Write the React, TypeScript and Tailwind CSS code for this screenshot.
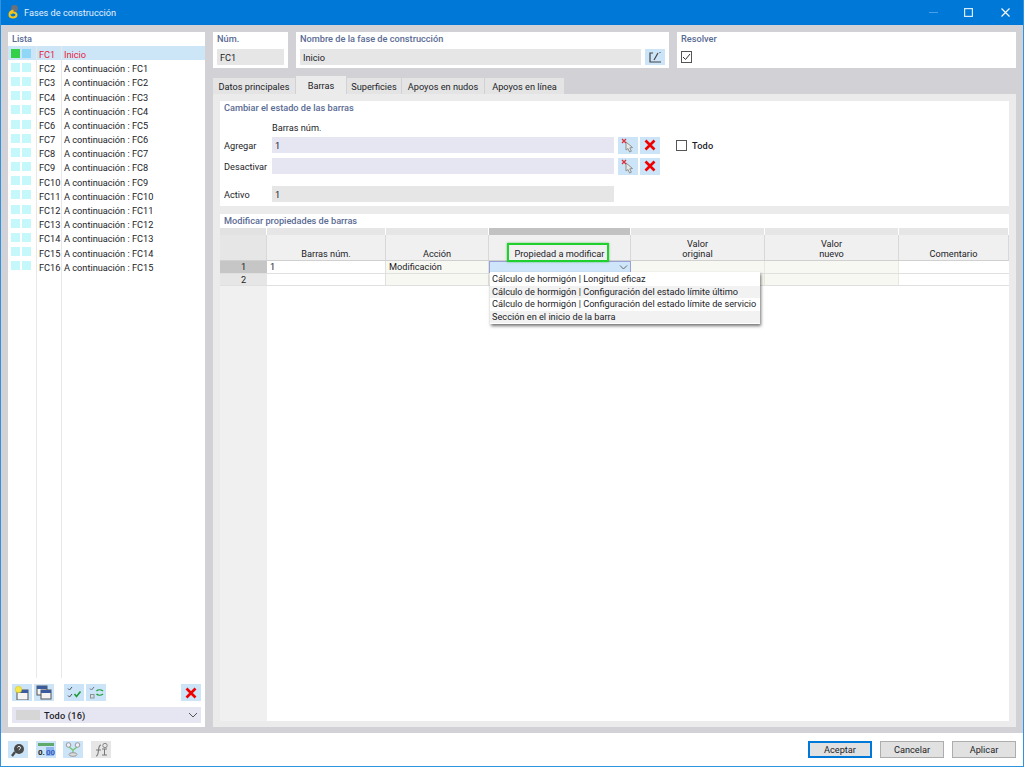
import { ReactNode } from "react";

const rows = Array.from({ length: 16 }, (_, i) => ({
  code: "FC" + (i + 1),
  name: i === 0 ? "Inicio" : "A continuación : FC" + i,
}));

const options = [
  "Cálculo de hormigón | Longitud eficaz",
  "Cálculo de hormigón | Configuración del estado límite último",
  "Cálculo de hormigón | Configuración del estado límite de servicio",
  "Sección en el inicio de la barra",
];

const IconBtn = ({ children, className = "bg-[#cce4f7]" }: { children: ReactNode; className?: string }) => (
  <div className={"flex h-[17px] w-5 items-center justify-center " + className}>{children}</div>
);

const RedX = () => (
  <svg width="12" height="12" viewBox="0 0 12 12">
    <path d="M1.5 1.5 L10.5 10.5 M10.5 1.5 L1.5 10.5" stroke="#f00000" strokeWidth="2.6" />
  </svg>
);

const PickIcon = () => (
  <svg width="14" height="15" viewBox="0 0 14 15">
    <path d="M5 4 L5 12 L7 10.5 L8.6 14 L10.4 13.2 L8.8 9.8 L11.5 9.5 Z" fill="#e8e8e8" stroke="#909090" strokeWidth="1" />
    <path d="M1 1 L5 5 M5 1 L1 5" stroke="#d9303a" strokeWidth="1.3" />
  </svg>
);

const WinIcon = ({ x = 3 }: { x?: number }) => (
  <>
    <rect x={x} y="5" width="11" height="10" fill="#f4f4f4" stroke="#555" strokeWidth="1" />
    <rect x={x} y="5" width="11" height="3" fill="#3a5c9c" />
  </>
);

const SectionTitle = ({ children }: { children: ReactNode }) => (
  <div className="text-[9.2px] leading-3 font-medium text-[#5a6b94]">{children}</div>
);

const HeadCell = ({ className, top, children }: { className: string; top?: string; children: ReactNode }) => (
  <div className={"flex flex-col items-center justify-end border-r border-[#d8d8d8] pb-[1px] text-[9.2px] leading-[10px] " + className}>
    {top && <div>{top}</div>}
    <div>{children}</div>
  </div>
);

const colClasses = ["w-[119px]", "w-[103px]", "w-[142px]", "w-[134px]", "w-[134px]", "w-[110px]"];

const Strip = ({ active }: { active: number }) => (
  <div className="flex h-[7px]">
    <div className="w-[47px] border-r border-white bg-[#e2e2e2]" />
    {colClasses.map((c, i) => (
      <div key={i} className={c + " border-r border-white " + (i === active ? "bg-[#c2c2c2]" : "bg-[#e6e6e6]")} />
    ))}
  </div>
);

const Tab = ({ className, active, children }: { className: string; active?: boolean; children: ReactNode }) => (
  <div className={"flex items-center justify-center pt-[2px] " + className + (active ? " h-[18px] bg-[#ebebeb]" : " h-4 bg-[#e4e4e4]")}>
    {children}
  </div>
);

export default function App() {
  return (
    <div className="flex h-[767px] w-[1024px] flex-col overflow-hidden border-x border-b border-[#2f93dd] bg-white font-['Roboto',sans-serif] text-[#1c1c28]">
      {/* ----Title bar---- */}
      <div className="-mx-px flex h-[25px] shrink-0 items-center bg-[#0078d7] pl-[7px] text-white">
        <svg width="12" height="14" viewBox="0 0 12 14" className="-mt-[2px]">
          <circle cx="7.5" cy="3.5" r="3.4" fill="#6d6f7a" />
          <path d="M6.5 5.5 C4 6 2.5 7.5 2.5 9.8 C2.5 11.5 4 12.6 6 12.6 C8 12.6 9.5 11.4 9.5 9.8 C9.5 8.2 8 7.4 6 7.6 C5 7.7 4 8.1 3.5 8.8" fill="none" stroke="#f5c518" strokeWidth="2" />
        </svg>
        <div className="ml-[5px] text-[9.2px] leading-none text-[#e4f1fb]">Fases de construcción</div>
        <div className="ml-auto flex items-center">
          <svg width="9" height="9" viewBox="0 0 9 9" className="mr-[26px]">
            <path d="M0 4.5 H9" stroke="#4a9fe8" />
          </svg>
          <svg width="9" height="9" viewBox="0 0 9 9" className="mr-[28px]">
            <rect x="0.6" y="0.6" width="7.8" height="7.8" fill="none" stroke="#d6ebfb" strokeWidth="1.2" />
          </svg>
          <svg width="9" height="9" viewBox="0 0 9 9" className="mr-[14px]">
            <path d="M0.5 0.5 L8.5 8.5 M8.5 0.5 L0.5 8.5" stroke="white" strokeWidth="1.1" />
          </svg>
        </div>
      </div>

      {/* ----Body---- */}
      <div className="flex h-[708px] shrink-0 gap-2 bg-[#d2d1d5] pt-[7px] pr-[7px] pb-[6px] pl-[7px]">
        {/* ----List---- */}
        <div className="flex w-[197px] flex-col bg-white">
          <div className="h-[14px] pt-[1px] pl-1 text-[9.2px] leading-3 font-medium text-[#5a6b94]">Lista</div>
          <div className="relative flex-1">
            {rows.map((r, i) => (
              <div key={r.code} className={"flex h-[14.2px] items-center text-[9.2px] leading-none " + (i === 0 ? "bg-[#cde6f7] text-[#e8203c]" : "")}>
                <div className={"ml-[3px] h-[9px] w-[9px] " + (i === 0 ? "bg-[#35d04a]" : "bg-[#c4f8fb]")} />
                <div className={"ml-[2px] h-[9px] w-[9px] " + (i === 0 ? "bg-[#8fd6f7]" : "bg-[#c4f8fb]")} />
                <div className="ml-[8px] w-[25px] pt-[3px]">{r.code}</div>
                <div className="pt-[3px]">{r.name}</div>
              </div>
            ))}
            <div className="absolute top-0 bottom-0 left-[28px] w-px bg-[#e8e8e8]" />
            <div className="absolute top-0 bottom-0 left-[53px] w-px bg-[#e8e8e8]" />
          </div>
          <div className="relative z-10 flex h-[23px] items-end gap-[2px] bg-white px-1">
            <IconBtn>
              <svg width="16" height="15" viewBox="0 0 16 15">
                <WinIcon />
                <circle cx="4.5" cy="4.5" r="3.2" fill="#f6e84a" stroke="#d8c020" strokeWidth="0.6" />
              </svg>
            </IconBtn>
            <IconBtn>
              <svg width="16" height="15" viewBox="0 0 16 15">
                <rect x="1" y="1" width="10" height="9" fill="#f4f4f4" stroke="#555" />
                <rect x="1" y="1" width="10" height="3" fill="#3a5c9c" />
                <rect x="5" y="5" width="10" height="9" fill="#f4f4f4" stroke="#555" />
                <rect x="5" y="5" width="10" height="3" fill="#3a5c9c" />
              </svg>
            </IconBtn>
            <IconBtn className="ml-[8px] bg-[#cce4f7]">
              <svg width="15" height="13" viewBox="0 0 15 13">
                <path d="M1 2.5 L2.5 4 L5 1 M1 9.5 L2.5 11 L5 8" fill="none" stroke="#505060" strokeWidth="1" />
                <path d="M7.5 8 L9.5 10.5 L13.5 5.5" fill="none" stroke="#1f9d3a" strokeWidth="1.6" />
              </svg>
            </IconBtn>
            <IconBtn>
              <svg width="15" height="13" viewBox="0 0 15 13">
                <path d="M1 2.5 L2.5 4 L5 1" fill="none" stroke="#707080" strokeWidth="1" />
                <rect x="1.5" y="8.5" width="3.5" height="3.5" fill="none" stroke="#909090" />
                <path d="M7.5 5 C9 3.5 12 3.5 14 5 M14 8 C12 9.5 9 9.5 7.5 8" fill="none" stroke="#1f9d3a" strokeWidth="1.4" />
              </svg>
            </IconBtn>
            <IconBtn className="ml-auto bg-[#cce4f7]">
              <RedX />
            </IconBtn>
          </div>
          <div className="mx-1 mt-[6px] mb-[4px] flex h-[16px] items-center bg-[#e6e6f2] pl-1 text-[9.2px] leading-none">
            <div className="h-[10px] w-6 bg-[#d6d6d6]" />
            <div className="ml-1 pt-[2px] font-medium tracking-[0.2px]">Todo (16)</div>
            <svg width="10" height="6" viewBox="0 0 10 6" className="mr-[3px] ml-auto">
              <path d="M1 1 L5 5 L9 1" fill="none" stroke="#555" />
            </svg>
          </div>
        </div>

        {/* ----Right side---- */}
        <div className="flex w-[803px] flex-col">
          <div className="flex h-[36px] gap-2">
            <div className="w-[75px] bg-white px-1">
              <div className="pt-[1px]"><SectionTitle>Núm.</SectionTitle></div>
              <div className="mt-[4px] flex h-[16px] items-center bg-[#e6e6e6] pt-[2px] pl-[3px] text-[9.2px] leading-none">FC1</div>
            </div>
            <div className="w-[373px] bg-white px-1">
              <div className="pt-[1px]"><SectionTitle>Nombre de la fase de construcción</SectionTitle></div>
              <div className="mt-[4px] flex gap-1">
                <div className="flex h-[16px] flex-1 items-center bg-[#e6e6e6] pt-[2px] pl-[3px] text-[9.2px] leading-none">Inicio</div>
                <div className="flex h-[16px] w-5 items-center justify-center bg-[#cce4f7]">
                  <svg width="14" height="13" viewBox="0 0 14 13">
                    <path d="M5 2 H2 V11 H13 M6 9 L10 2" fill="none" stroke="#444" strokeWidth="1.2" />
                    <path d="M12 1 V2" stroke="#444" />
                  </svg>
                </div>
              </div>
            </div>
            <div className="flex-1 bg-white px-1">
              <div className="pt-[1px]"><SectionTitle>Resolver</SectionTitle></div>
              <div className="mt-[6px] flex h-[12px] w-[11px] items-center justify-center border border-[#555] bg-white">
                <svg width="9" height="8" viewBox="0 0 9 8">
                  <path d="M1 4 L3.5 6.5 L8 1" fill="none" stroke="#333" />
                </svg>
              </div>
            </div>
          </div>

          {/* ----Tabs---- */}
          <div className="mt-[8px] flex h-[18px] items-end gap-px text-[9.2px] leading-none">
            <Tab className="w-[82px]">Datos principales</Tab>
            <Tab className="w-[50px]" active>Barras</Tab>
            <Tab className="w-[54px]">Superficies</Tab>
            <Tab className="w-[82px]">Apoyos en nudos</Tab>
            <Tab className="w-[79px]">Apoyos en línea</Tab>
          </div>

          <div className="flex flex-1 flex-col gap-2 bg-[#ebebeb] px-[7px] pt-[7px] pb-[6px]">
            {/* ----Change state---- */}
            <div className="h-[105px] bg-white pt-[1px] pl-1">
              <SectionTitle>Cambiar el estado de las barras</SectionTitle>
              <div className="mt-[8px] ml-[48px] text-[9.2px] leading-3">Barras núm.</div>
              <div className="mt-[3px] flex h-[16px] items-center text-[9.2px] leading-none">
                <div className="w-[48px] pt-[2px]">Agregar</div>
                <div className="flex h-[16px] w-[342px] items-center bg-[#e6e6f2] pt-[2px] pl-[3px]">1</div>
                <div className="ml-1 flex gap-[2px]">
                  <IconBtn><PickIcon /></IconBtn>
                  <IconBtn><RedX /></IconBtn>
                </div>
                <div className="ml-[16px] h-[11px] w-[11px] border border-[#555]" />
                <div className="ml-[5px] pt-[2px] font-medium tracking-[0.2px]">Todo</div>
              </div>
              <div className="mt-[5px] flex h-[16px] items-center text-[9.2px] leading-none">
                <div className="w-[48px] pt-[1px]">Desactivar</div>
                <div className="h-[16px] w-[342px] bg-[#e6e6f2]" />
                <div className="ml-1 flex gap-[2px]">
                  <IconBtn><PickIcon /></IconBtn>
                  <IconBtn><RedX /></IconBtn>
                </div>
              </div>
              <div className="mt-[12px] flex h-[16px] items-center text-[9.2px] leading-none">
                <div className="w-[48px] pt-[2px]">Activo</div>
                <div className="flex h-[16px] w-[342px] items-center bg-[#e6e6e6] pt-[2px] pl-[3px]">1</div>
              </div>
            </div>

            {/* ----Table---- */}
            <div className="flex flex-1 flex-col bg-white">
              <div className="h-[14px] pt-[1px] pl-1"><SectionTitle>Modificar propiedades de barras</SectionTitle></div>
              <Strip active={2} />
              <div className="flex h-[26px] border-b border-[#d0d0d0] bg-[#f0f0f0]">
                <div className="w-[47px] border-r border-[#d8d8d8] bg-[#e6e6e6]" />
                <HeadCell className={colClasses[0]}>Barras núm.</HeadCell>
                <HeadCell className={colClasses[1]}>Acción</HeadCell>
                <HeadCell className={colClasses[2]}>Propiedad a modificar</HeadCell>
                <HeadCell className={colClasses[3]} top="Valor">original</HeadCell>
                <HeadCell className={colClasses[4]} top="Valor">nuevo</HeadCell>
                <HeadCell className={colClasses[5]}>Comentario</HeadCell>
              </div>
              <div className="relative flex flex-1 flex-col">
                <div className="flex h-[13px] border-b border-[#e0e0e0] text-[9.2px] leading-none">
                  <div className="flex w-[47px] items-center justify-center bg-[#c6c6c6]">1</div>
                  <div className={colClasses[0] + " flex items-center border-r border-[#e0e0e0] pl-[3px]"}>1</div>
                  <div className={colClasses[1] + " flex items-center border-r border-[#e0e0e0] bg-[#f8f8f2] pl-[3px]"}>Modificación</div>
                  <div className={colClasses[2] + " flex items-center justify-end border border-[#9aa0d8] bg-[#cfe6fa] pr-[2px]"}>
                    <svg width="9" height="5" viewBox="0 0 9 5">
                      <path d="M1 0.5 L4.5 4 L8 0.5" fill="none" stroke="#666" />
                    </svg>
                  </div>
                  <div className={colClasses[3] + " border-r border-[#e8e8e0] bg-[#f8f8f2]"} />
                  <div className={colClasses[4] + " border-r border-[#e8e8e0] bg-[#f8f8f2]"} />
                  <div className={colClasses[5]} />
                </div>
                <div className="flex h-[12px] border-b border-[#e0e0e0] text-[9.2px] leading-none">
                  <div className="flex w-[47px] items-center justify-center bg-[#e6e6e6]">2</div>
                  <div className={colClasses[0] + " border-r border-[#e0e0e0]"} />
                  <div className={colClasses[1] + " border-r border-[#e0e0e0] bg-[#f8f8f2]"} />
                  <div className={colClasses[2] + " bg-[#f8f8f2]"} />
                  <div className={colClasses[3] + " border-r border-[#e8e8e0] bg-[#f8f8f2]"} />
                  <div className={colClasses[4] + " border-r border-[#e8e8e0] bg-[#f8f8f2]"} />
                  <div className={colClasses[5]} />
                </div>
                <div className="flex-1">
                  <div className="h-full w-[47px] bg-[#f0f0f0]" />
                </div>
                {/* ----Dropdown---- */}
                <div className="absolute top-[11px] left-[270px] z-10 w-[270px] bg-white py-[1px] text-[9.2px] leading-[12.6px] whitespace-nowrap shadow-[1px_2px_3px_rgba(0,0,0,0.55)]">
                  {options.map((o, i) => (
                    <div key={o} className={"pl-[2px] " + (i === 1 || i === 3 ? "bg-[#f2f2f2]" : "")}>{o}</div>
                  ))}
                </div>
                {/* ----Green highlight---- */}
                <div className="absolute top-[-18px] left-[287px] z-20 h-[19px] w-[102px] border-2 border-[#1fd02f] shadow-[0_0_2px_rgba(0,160,20,0.6)]" />
              </div>
            </div>
          </div>
        </div>
      </div>

      {/* ----Footer---- */}
      <div className="flex flex-1 items-center px-[7px]">
        <div className="flex gap-[7.5px]">
          <IconBtn>
            <svg width="14" height="14" viewBox="0 0 14 14">
              <circle cx="8" cy="6" r="5" fill="#4a4a4a" />
              <path d="M4 9 L1 13" stroke="#4a4a4a" strokeWidth="2.4" />
              <path d="M6.5 4.5 C7 3 9.5 3 9.5 4.8 C9.5 6 8 6 8 7.2" fill="none" stroke="white" />
            </svg>
          </IconBtn>
          <IconBtn>
            <svg width="18" height="15" viewBox="0 0 18 15">
              <rect x="1" y="1" width="16" height="3" fill="#5fa96a" />
              <rect x="9" y="5" width="8" height="9" fill="#8fb6ee" />
              <text x="1" y="13" fontSize="8" fontWeight="700" fill="#222" fontFamily="Roboto">0.</text>
              <text x="9" y="13" fontSize="8" fontWeight="700" fill="#3560c0" fontFamily="Roboto">00</text>
            </svg>
          </IconBtn>
          <IconBtn>
            <svg width="16" height="15" viewBox="0 0 16 15">
              <circle cx="3.5" cy="3" r="2.3" fill="#eef" stroke="#999" />
              <circle cx="12.5" cy="3" r="2.3" fill="#eef" stroke="#999" />
              <path d="M4 5 L8 8 L12 5 M8 8 V11" fill="none" stroke="#7cc47a" strokeWidth="1.4" />
              <ellipse cx="8" cy="12.5" rx="4" ry="1.8" fill="#ddd" stroke="#999" />
            </svg>
          </IconBtn>
          <IconBtn className="bg-[#e6e6e6]">
            <svg width="16" height="15" viewBox="0 0 16 15">
              <path d="M3 14 C5 14 5 12 5.5 8 C6 4 6.5 3 8 3 M3 8 H8" fill="none" stroke="#777" strokeWidth="1.1" />
              <circle cx="12" cy="3.5" r="2.2" fill="none" stroke="#888" />
              <path d="M9 7 H14 M11.5 7 V13 M9 13 H14" fill="none" stroke="#777" />
            </svg>
          </IconBtn>
        </div>
        <div className="ml-auto flex gap-2 text-[9.2px] leading-none">
          <div className="flex h-[17px] w-[64px] items-center justify-center border-2 border-[#0078d7] bg-[#e1e1e1]">Aceptar</div>
          <div className="flex h-[17px] w-[64px] items-center justify-center border border-[#adadad] bg-[#e1e1e1]">Cancelar</div>
          <div className="flex h-[17px] w-[64px] items-center justify-center border border-[#adadad] bg-[#e1e1e1]">Aplicar</div>
        </div>
      </div>
    </div>
  );
}
